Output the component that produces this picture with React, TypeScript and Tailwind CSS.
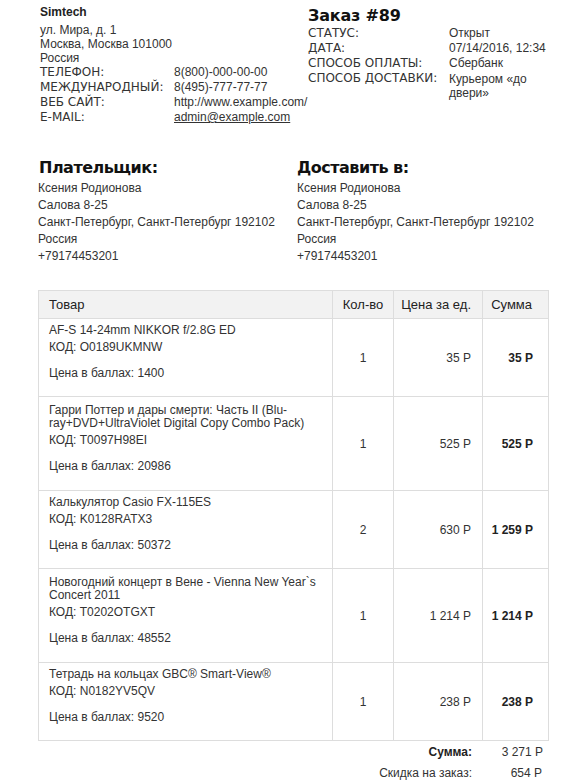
import React from 'react';

interface Item {
    name: string;
    code: string;
    points: string;
    qty: string;
    price: string;
    total: string;
    tall?: boolean;
}

const items: Item[] = [
    { name: 'AF-S 14-24mm NIKKOR f/2.8G ED', code: 'O0189UKMNW', points: '1400', qty: '1', price: '35 Р', total: '35 Р' },
    { name: 'Гарри Поттер и дары смерти: Часть II (Blu-ray+DVD+UltraViolet Digital Copy Combo Pack)', code: 'T0097H98EI', points: '20986', qty: '1', price: '525 Р', total: '525 Р', tall: true },
    { name: 'Калькулятор Casio FX-115ES', code: 'K0128RATX3', points: '50372', qty: '2', price: '630 Р', total: '1 259 Р' },
    { name: 'Новогодний концерт в Вене - Vienna New Year`s Concert 2011', code: 'T0202OTGXT', points: '48552', qty: '1', price: '1 214 Р', total: '1 214 Р', tall: true },
    { name: 'Тетрадь на кольцах GBC® Smart-View®', code: 'N0182YV5QV', points: '9520', qty: '1', price: '238 Р', total: '238 Р' },
];

const Address = () => (
    <div className="mt-[2px] leading-[17px]">
        <div>Ксения Родионова</div>
        <div>Салова 8-25</div>
        <div>Санкт-Петербург, Санкт-Петербург 192102</div>
        <div>Россия</div>
        <div>+79174453201</div>
    </div>
);

export default function App() {
    const label = "font-['DejaVu_Sans',Verdana,sans-serif] text-[12px]";
    const heading = "font-['DejaVu_Sans',Verdana,sans-serif] font-bold text-[16px] leading-[20px] text-[#111]";

    return (
        <div className="min-h-[783px] w-[565px] bg-white font-['Liberation_Sans',Arial,sans-serif] text-[12px] text-[#333]">
            {/* company + order info */}
            <div className="flex pt-[5px] pl-[40px]">
                <div className="w-[268px]">
                    <div className="font-bold leading-[15px] text-[#222]">Simtech</div>
                    <div className="mt-[3px] leading-[14px]">
                        <div>ул. Мира, д. 1</div>
                        <div>Москва, Москва 101000</div>
                        <div>Россия</div>
                    </div>
                    <div className="grid grid-cols-[134px_1fr] leading-[15px] whitespace-nowrap">
                        <div className={label}>ТЕЛЕФОН:</div>
                        <div>8(800)-000-00-00</div>
                        <div className={label}>МЕЖДУНАРОДНЫЙ:</div>
                        <div>8(495)-777-77-77</div>
                        <div className={label}>ВЕБ САЙТ:</div>
                        <div>http://www.example.com/</div>
                        <div className={label}>E-MAIL:</div>
                        <div><span className="underline">admin@example.com</span></div>
                    </div>
                </div>
                <div className="pt-[1px]">
                    <h1 className={heading + ' tracking-[-0.2px]'}>Заказ #89</h1>
                    <div className="grid grid-cols-[141px_100px] leading-[15px]">
                        <div className={label}>СТАТУС:</div>
                        <div>Открыт</div>
                        <div className={label}>ДАТА:</div>
                        <div>07/14/2016, 12:34</div>
                        <div className={label}>СПОСОБ ОПЛАТЫ:</div>
                        <div>Сбербанк</div>
                        <div className={label}>СПОСОБ ДОСТАВКИ:</div>
                        <div className="leading-[14px] pt-[1px]">Курьером «до двери»</div>
                    </div>
                </div>
            </div>

            {/* billing / shipping */}
            <div className="mt-[33px] ml-[38px] flex">
                <div className="w-[259px]">
                    <h2 className={heading + ' ml-[1px] tracking-[-0.5px]'}>Плательщик:</h2>
                    <Address />
                </div>
                <div>
                    <h2 className={heading + ' tracking-[-0.5px]'}>Доставить в:</h2>
                    <Address />
                </div>
            </div>

            {/* products */}
            <table className="mt-[25px] ml-[38px] w-[510px] table-fixed border-collapse border border-[#ddd]">
                <colgroup>
                    <col className="w-[294px]" />
                    <col className="w-[61px]" />
                    <col className="w-[89px]" />
                    <col className="w-[66px]" />
                </colgroup>
                <thead>
                    <tr className="bg-[#f2f2f2] text-[13px] text-[#222]">
                        <th className="border border-[#ddd] px-[10px] py-[6px] text-left font-normal leading-[15px]">Товар</th>
                        <th className="border border-[#ddd] py-[6px] text-center font-normal leading-[15px]">Кол-во</th>
                        <th className="border border-[#ddd] pr-[11px] py-[6px] text-right font-normal leading-[15px]">Цена за ед.</th>
                        <th className="border border-[#ddd] pr-[16px] py-[6px] text-right font-normal leading-[15px]">Сумма</th>
                    </tr>
                </thead>
                <tbody>
                    {items.map((it) => (
                        <tr key={it.code}>
                            <td className={`border border-[#ddd] px-[10px] align-top ${it.tall ? 'pt-[7px] pb-[17px]' : 'pt-[5px] pb-[16px]'}`}>
                                <div className="leading-[13px]">{it.name}</div>
                                <div className="mt-[3px] leading-[14px]">КОД: {it.code}</div>
                                <div className="mt-[12px] leading-[14px]">Цена в баллах: {it.points}</div>
                            </td>
                            <td className="border border-[#ddd] text-center align-middle">{it.qty}</td>
                            <td className="border border-[#ddd] pr-[11px] text-right align-middle whitespace-nowrap">{it.price}</td>
                            <td className="border border-[#ddd] pr-[15px] text-right align-middle font-bold text-[#222] whitespace-nowrap">{it.total}</td>
                        </tr>
                    ))}
                </tbody>
            </table>

            {/* totals */}
            <div className="ml-[38px] mt-[1px] w-[510px] grid grid-cols-[1fr_71px] leading-[21px] pr-[5px]">
                <div className="text-right font-bold text-[#222]">Сумма:</div>
                <div className="text-right">3 271 Р</div>
                <div className="text-right">Скидка на заказ:</div>
                <div className="text-right pr-[1px]">654 Р</div>
            </div>
        </div>
    );
}
